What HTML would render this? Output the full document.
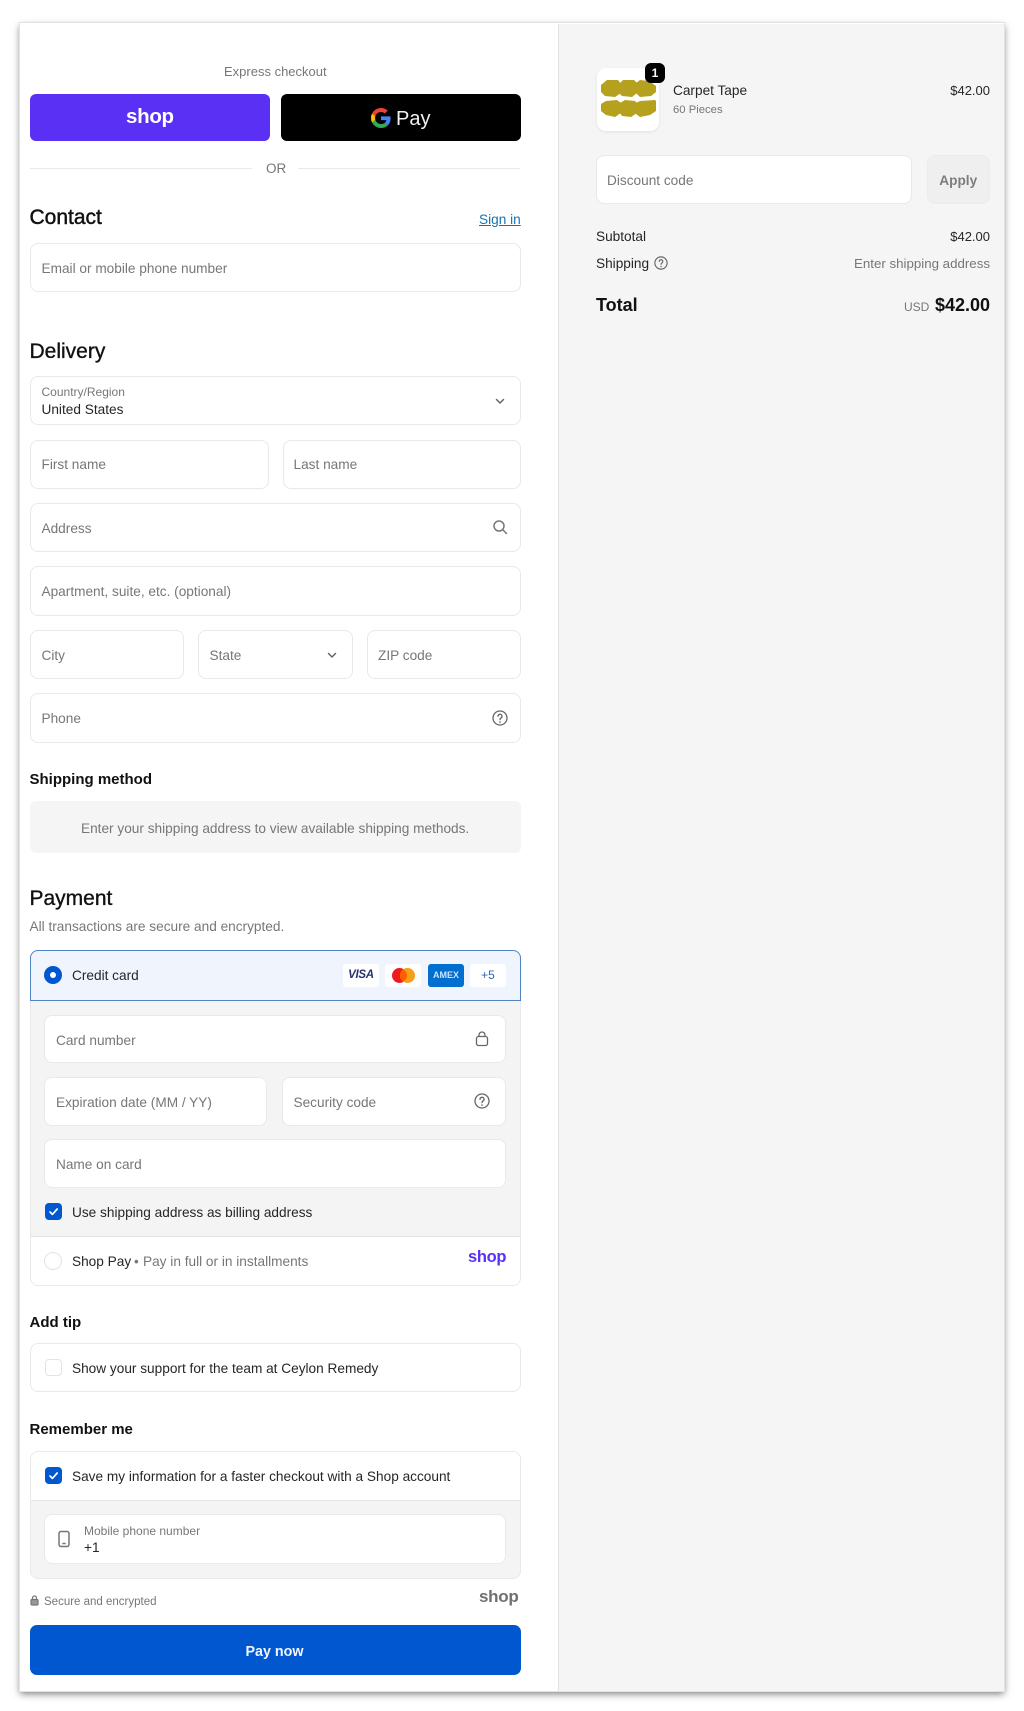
<!DOCTYPE html>
<html lang="en"><head><meta charset="utf-8"><title>Checkout</title>
<style>
html,body{margin:0;padding:0;background:#fff;width:1024px;height:1711px;overflow:hidden}
body{position:relative;font-family:"Liberation Sans",sans-serif;color:#262626;font-size:13.65px;filter:blur(.3px)}
.a{position:absolute}
.t{position:absolute;line-height:22px;white-space:nowrap}
.s{line-height:20px}
.ph{color:#777}
.h{font-size:21px;line-height:20px;color:#111;font-weight:400;-webkit-text-stroke:.35px #111}
.h2{font-size:15px;line-height:20px;font-weight:700;color:#111}
.i{position:absolute;background:#fff;border:1px solid #e9e9e9;border-radius:8px;box-sizing:border-box}
svg{position:absolute;overflow:visible}
.logo{font-weight:700;letter-spacing:-.3px;line-height:20px}
.cb{position:absolute;width:17px;height:17px;border-radius:4px;background:#0057cf}
.pc{position:absolute;top:964px;width:36px;height:23px;background:#fff;border-radius:3px;box-sizing:border-box;text-align:center;line-height:23px}
</style></head><body>
<div class="a" style="left:20px;top:23px;width:984px;height:1668px;background:#fff;box-shadow:0 3px 7px rgba(0,0,0,.5);outline:1px solid #e2e2e2"></div>
<div class="a" style="left:558px;top:24px;width:446px;height:1667px;background:#f5f5f5;border-left:1px solid #e3e3e3;box-sizing:border-box"></div>

<div class="t s ph" style="left:224px;top:62px;font-size:13px">Express checkout</div>
<div class="a" style="left:29.5px;top:94px;width:240px;height:47px;background:#5a31f4;border-radius:6px"></div>
<div class="t logo" style="left:126px;top:107px;font-size:20.5px;color:#fff">shop</div>
<div class="a" style="left:280.5px;top:94px;width:240px;height:47px;background:#000;border-radius:6px"></div>
<svg style="left:371px;top:108px" width="20" height="20" viewBox="0 0 48 48"><path fill="#EA4335" d="M24 9.5c3.54 0 6.71 1.22 9.21 3.6l6.85-6.85C35.9 2.38 30.47 0 24 0 14.62 0 6.51 5.38 2.56 13.22l7.98 6.19C12.43 13.72 17.74 9.5 24 9.5z"/><path fill="#4285F4" d="M46.98 24.55c0-1.57-.15-3.09-.38-4.55H24v9.02h12.94c-.58 2.96-2.26 5.48-4.78 7.18l7.73 6c4.51-4.18 7.09-10.36 7.09-17.65z"/><path fill="#FBBC05" d="M10.53 28.59c-.48-1.45-.76-2.99-.76-4.59s.27-3.14.76-4.59l-7.98-6.19C.92 16.46 0 20.12 0 24c0 3.88.92 7.54 2.56 10.78l7.97-6.19z"/><path fill="#34A853" d="M24 48c6.48 0 11.93-2.13 15.89-5.81l-7.73-6c-2.15 1.45-4.92 2.3-8.16 2.3-6.26 0-11.57-4.22-13.47-9.91l-7.98 6.19C6.51 42.62 14.62 48 24 48z"/></svg>
<div class="t" style="left:396px;top:108px;font-size:20px;color:#f1f1f1">Pay</div>

<div class="a" style="left:29.5px;top:167.5px;width:222px;height:1px;background:#e9e9e9"></div>
<div class="a" style="left:298px;top:167.5px;width:222px;height:1px;background:#e9e9e9"></div>
<div class="t s ph" style="left:266px;top:159px;font-size:13.5px">OR</div>

<div class="t h" style="left:29.5px;top:208px;-webkit-text-stroke:.45px #111">Contact</div>
<div class="t" style="left:479px;top:209px;color:#1773b0;text-decoration:underline">Sign in</div>
<div class="i" style="left:29.5px;top:243px;width:491px;height:49px"></div>
<div class="t ph" style="left:41.5px;top:258px">Email or mobile phone number</div>

<div class="t h" style="left:29.5px;top:341.5px">Delivery</div>
<div class="i" style="left:29.5px;top:376px;width:491px;height:49px"></div>
<div class="t s ph" style="left:41.5px;top:382px;font-size:12px">Country/Region</div>
<div class="t" style="left:41.5px;top:399px">United States</div>
<svg style="left:494px;top:395px" width="12" height="12" viewBox="0 0 12 12" fill="none" stroke="#666" stroke-width="1.5" stroke-linecap="round" stroke-linejoin="round"><path d="M2.5 4.5 6 8l3.5-3.5"/></svg>

<div class="i" style="left:29.5px;top:440px;width:239px;height:49px"></div>
<div class="t ph" style="left:41.5px;top:454px">First name</div>
<div class="i" style="left:282.5px;top:440px;width:238px;height:49px"></div>
<div class="t ph" style="left:293.5px;top:454px">Last name</div>

<div class="i" style="left:29.5px;top:503px;width:491px;height:49px"></div>
<div class="t ph" style="left:41.5px;top:518px">Address</div>
<svg style="left:492px;top:519px" width="16" height="16" viewBox="0 0 16 16" fill="none" stroke="#777" stroke-width="1.5" stroke-linecap="round"><circle cx="7" cy="7" r="5"/><path d="m11 11 3.5 3.5"/></svg>

<div class="i" style="left:29.5px;top:566px;width:491px;height:50px"></div>
<div class="t ph" style="left:41.5px;top:581px">Apartment, suite, etc. (optional)</div>

<div class="i" style="left:29.5px;top:630px;width:154px;height:49px"></div>
<div class="t ph" style="left:41.5px;top:645px">City</div>
<div class="i" style="left:197.5px;top:630px;width:155px;height:49px"></div>
<div class="t ph" style="left:209.5px;top:645px">State</div>
<svg style="left:326px;top:649px" width="12" height="12" viewBox="0 0 12 12" fill="none" stroke="#666" stroke-width="1.5" stroke-linecap="round" stroke-linejoin="round"><path d="M2.5 4.5 6 8l3.5-3.5"/></svg>
<div class="i" style="left:366.5px;top:630px;width:154px;height:49px"></div>
<div class="t ph" style="left:378px;top:645px">ZIP code</div>

<div class="i" style="left:29.5px;top:693px;width:491px;height:50px"></div>
<div class="t ph" style="left:41.5px;top:708px">Phone</div>
<svg style="left:492px;top:710px" width="16" height="16" viewBox="0 0 16 16" fill="none" stroke="#666" stroke-width="1.3" stroke-linecap="round"><circle cx="8" cy="8" r="7"/><path d="M6 6.3a2 2 0 1 1 3 1.7c-.7.4-1 .8-1 1.6"/><path d="M8 12v.1" stroke-width="1.6"/></svg>

<div class="t h2" style="left:29.5px;top:769.5px">Shipping method</div>
<div class="a" style="left:29.5px;top:801px;width:491px;height:52px;background:#f5f5f5;border-radius:6px"></div>
<div class="t ph" style="left:81px;top:818px">Enter your shipping address to view available shipping methods.</div>

<div class="t h" style="left:29.5px;top:889px">Payment</div>
<div class="t ph" style="left:29.5px;top:916px">All transactions are secure and encrypted.</div>

<div class="a" style="left:29.5px;top:950px;width:491px;height:336px;background:#fff;border:1px solid #e9e9e9;border-radius:8px;box-sizing:border-box"></div>
<div class="a" style="left:30.5px;top:1000px;width:489px;height:237px;background:#f4f4f4;border-bottom:1px solid #e6e6e6;box-sizing:border-box"></div>
<div class="a" style="left:29.5px;top:950px;width:491px;height:51px;background:#f0f5fd;border:1px solid #4f84c4;border-radius:8px 8px 0 0;box-sizing:border-box"></div>
<div class="a" style="left:44px;top:966px;width:18px;height:18px;border-radius:50%;background:#0057cf"></div>
<div class="a" style="left:50px;top:972px;width:6px;height:6px;border-radius:50%;background:#fff"></div>
<div class="t" style="left:72px;top:965px">Credit card</div>
<div class="pc" style="left:343px;color:#26336e;font:italic 700 11.5px/23px 'Liberation Sans',sans-serif;letter-spacing:-.3px">VISA</div>
<div class="pc" style="left:385px"></div>
<div class="a" style="left:392px;top:967.5px;width:15px;height:15px;border-radius:50%;background:#eb1c1b"></div>
<div class="a" style="left:400px;top:967.5px;width:15px;height:15px;border-radius:50%;background:#f79e1b"></div>
<div class="a" style="left:400px;top:969.5px;width:7px;height:11px;border-radius:50%;background:#ff5f00"></div>
<div class="pc" style="left:428px;background:#016fd0;color:#cfe4fa;font:700 9px/23px 'Liberation Sans',sans-serif">AMEX</div>
<div class="pc" style="left:470px;color:#2c6ab0;font-size:12px">+5</div>

<div class="i" style="left:44px;top:1015px;width:462px;height:48px"></div>
<div class="t ph" style="left:56px;top:1030px">Card number</div>
<svg style="left:474px;top:1030px" width="16" height="17" viewBox="0 0 16 17" fill="none" stroke="#666" stroke-width="1.3" stroke-linejoin="round"><rect x="2.5" y="6.5" width="11" height="9" rx="2"/><path d="M5 6.5V5a3 3 0 0 1 6 0v1.5"/></svg>

<div class="i" style="left:44px;top:1077px;width:223px;height:49px"></div>
<div class="t ph" style="left:56px;top:1092px">Expiration date (MM / YY)</div>
<div class="i" style="left:281.5px;top:1077px;width:224.5px;height:49px"></div>
<div class="t ph" style="left:293.5px;top:1092px">Security code</div>
<svg style="left:474px;top:1093px" width="16" height="16" viewBox="0 0 16 16" fill="none" stroke="#666" stroke-width="1.3" stroke-linecap="round"><circle cx="8" cy="8" r="7"/><path d="M6 6.3a2 2 0 1 1 3 1.7c-.7.4-1 .8-1 1.6"/><path d="M8 12v.1" stroke-width="1.6"/></svg>

<div class="i" style="left:44px;top:1139px;width:462px;height:49px"></div>
<div class="t ph" style="left:56px;top:1154px">Name on card</div>

<div class="cb" style="left:45px;top:1203px"></div>
<svg style="left:45px;top:1203px" width="17" height="17" viewBox="0 0 17 17" fill="none" stroke="#fff" stroke-width="1.7" stroke-linecap="round" stroke-linejoin="round"><path d="m5 9 2.4 2.4L12.2 6"/></svg>
<div class="t" style="left:72px;top:1202px">Use shipping address as billing address</div>

<div class="a" style="left:44px;top:1252px;width:18px;height:18px;border-radius:50%;background:#fff;border:1px solid #e3e3e3;box-sizing:border-box"></div>
<div class="t" style="left:72px;top:1251px">Shop Pay</div>
<div class="t ph" style="left:134px;top:1251px">•</div>
<div class="t ph" style="left:143px;top:1251px">Pay in full or in installments</div>
<div class="t logo" style="left:468px;top:1247px;font-size:16.5px;color:#5a31f4">shop</div>

<div class="t h2" style="left:29.5px;top:1312.5px">Add tip</div>
<div class="i" style="left:29.5px;top:1343px;width:491px;height:49px"></div>
<div class="a" style="left:45px;top:1359px;width:17px;height:17px;border-radius:4px;background:#fff;border:1px solid #e3e3e3;box-sizing:border-box"></div>
<div class="t" style="left:72px;top:1358px">Show your support for the team at Ceylon Remedy</div>

<div class="t h2" style="left:29.5px;top:1419.5px">Remember me</div>
<div class="a" style="left:29.5px;top:1451px;width:491px;height:128px;background:#f4f4f4;border:1px solid #e9e9e9;border-radius:8px;box-sizing:border-box"></div>
<div class="a" style="left:30.5px;top:1452px;width:489px;height:49px;background:#fff;border-bottom:1px solid #e6e6e6;border-radius:7px 7px 0 0;box-sizing:border-box"></div>
<div class="cb" style="left:45px;top:1467px"></div>
<svg style="left:45px;top:1467px" width="17" height="17" viewBox="0 0 17 17" fill="none" stroke="#fff" stroke-width="1.7" stroke-linecap="round" stroke-linejoin="round"><path d="m5 9 2.4 2.4L12.2 6"/></svg>
<div class="t" style="left:72px;top:1466px">Save my information for a faster checkout with a Shop account</div>
<div class="i" style="left:44px;top:1514px;width:462px;height:50px"></div>
<svg style="left:57px;top:1530px" width="14" height="18" viewBox="0 0 14 18" fill="none" stroke="#777" stroke-width="1.5" stroke-linecap="round"><rect x="2" y="1.5" width="10" height="15" rx="2"/><path d="M6 13.5h2"/></svg>
<div class="t s ph" style="left:84px;top:1521px;font-size:12px">Mobile phone number</div>
<div class="t" style="left:84px;top:1537px">+1</div>

<svg style="left:30px;top:1595px" width="9" height="11" viewBox="0 0 9 11" fill="none" stroke="#777" stroke-width="1.2"><rect x="1" y="4.5" width="7" height="5.5" rx="1" fill="#999"/><path d="M2.5 4.5V3a2 2 0 0 1 4 0v1.5"/></svg>
<div class="t ph" style="left:44px;top:1591px;font-size:11.5px">Secure and encrypted</div>
<div class="t logo" style="left:479px;top:1587px;font-size:17px;color:#707070">shop</div>
<div class="a" style="left:29.5px;top:1625px;width:491px;height:50px;background:#0057cf;border-radius:7px"></div>
<div class="t s" style="left:245.5px;top:1641.5px;font-size:14.3px;font-weight:700;color:#f2f6fc">Pay now</div>

<div class="a" style="left:597px;top:68px;width:62px;height:63px;background:#fff;border-radius:9px;box-shadow:0 1px 3px rgba(0,0,0,.08)"></div>
<svg style="left:600.5px;top:80px" width="55" height="39" viewBox="0 0 55 39" fill="#b5a11d"><path d="M0 5 6 0h11l3 4v9l-6 4-10-1-4-4z"/><path d="M18 4l4-4h11l3 3v10l-5 4-10-1-3-3z"/><path d="M35 3l4-3 9 1 7 5v6l-5 4-11 1-4-4z"/><path d="M0 24l5-3 11-1 4 3v10l-6 4-9-2-5-4z"/><path d="M19 23l5-3 10 1 2 2v10l-6 4-9-1-3-4z"/><path d="M35 23l4-2 15-1 1 1v10l-6 4-10 2-4-3z"/></svg>
<div class="a" style="left:645px;top:63px;width:20px;height:20px;background:#000;border-radius:6px"></div>
<div class="t s" style="left:645px;top:63px;width:20px;text-align:center;font-size:12px;font-weight:700;color:#fff">1</div>
<div class="t" style="left:673px;top:80px">Carpet Tape</div>
<div class="t s ph" style="left:673px;top:99.5px;font-size:11.3px">60 Pieces</div>
<div class="t" style="right:34px;top:80px;font-size:13px">$42.00</div>

<div class="i" style="left:596px;top:155px;width:316px;height:49px"></div>
<div class="t ph" style="left:607px;top:170px">Discount code</div>
<div class="a" style="left:926.5px;top:155px;width:63.5px;height:49px;background:#efefef;border:1px solid #ebebeb;border-radius:8px;box-sizing:border-box"></div>
<div class="t s" style="left:926.5px;top:171px;width:63.5px;text-align:center;font-weight:700;color:#7d7d7d">Apply</div>

<div class="t" style="left:596px;top:226px">Subtotal</div>
<div class="t" style="right:34px;top:226px;font-size:13px">$42.00</div>
<div class="t" style="left:596px;top:253px">Shipping</div>
<svg style="left:654px;top:256px" width="14" height="14" viewBox="0 0 16 16" fill="none" stroke="#666" stroke-width="1.3" stroke-linecap="round"><circle cx="8" cy="8" r="7"/><path d="M6 6.3a2 2 0 1 1 3 1.7c-.7.4-1 .8-1 1.6"/><path d="M8 12v.1" stroke-width="1.6"/></svg>
<div class="t ph" style="right:34px;top:253px;font-size:13.3px">Enter shipping address</div>
<div class="t h" style="left:596px;top:295px;font-size:18px;font-weight:700;-webkit-text-stroke:0">Total</div>
<div class="t s ph" style="left:904px;top:297px;font-size:12px">USD</div>
<div class="t s" style="right:34px;top:295px;font-size:18px;font-weight:700;color:#111">$42.00</div>
</body></html>
